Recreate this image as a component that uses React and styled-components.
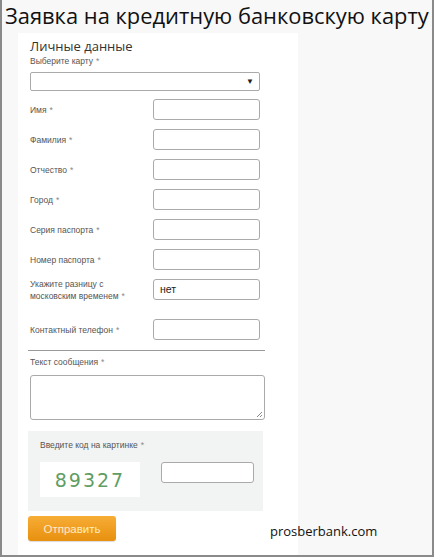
import React from "react";
import styled, { createGlobalStyle } from "styled-components";

const Global = createGlobalStyle`
  html, body { margin: 0; padding: 0; }
  body { font-family: "Liberation Sans", Arial, sans-serif; background: #fff; }
`;

const Frame = styled.div`
  box-sizing: border-box;
  width: 434px;
  height: 557px;
  border: 2px solid #8a8a8a;
  border-top: none;
  background: #f8f8f8;
  display: flex;
  flex-direction: column;
  overflow: hidden;
`;

const Heading = styled.h1`
  margin: 0;
  padding: 0 0 0 3px;
  height: 33px;
  font-family: "Open Sans", sans-serif;
  font-weight: 400;
  font-size: 21.9px;
  line-height: 31px;
  color: #111;
  white-space: nowrap;
`;

const Body = styled.div`
  display: flex;
  flex: 1;
  padding-left: 16px;
`;

const Panel = styled.div`
  width: 280px;
  background: #fff;
  padding: 4px 0 0 12px;
  box-sizing: border-box;
  display: flex;
  flex-direction: column;
`;

const Section = styled.div`
  font-family: "Open Sans", sans-serif;
  font-size: 13px;
  color: #333;
  line-height: 18px;
`;

const Label = styled.div`
  font-size: 8.5px;
  color: #555;
  line-height: 12px;
  width: ${(p) => p.width || "auto"};
  margin-top: ${(p) => p.offset || 0}px;
`;

const Star = styled.span`
  color: #888;
  margin-left: 3px;
`;

const Select = styled.div`
  margin-top: 5px;
  width: 230px;
  height: 19px;
  border: 1px solid #aaa;
  border-radius: 2px;
  box-sizing: border-box;
  display: flex;
  justify-content: flex-end;
  align-items: center;
  padding-right: 5px;
  font-size: 8px;
  color: #222;
`;

const Rows = styled.div`
  display: flex;
  flex-direction: column;
  margin-top: 8px;
`;

const Row = styled.div`
  display: flex;
  align-items: center;
  height: 21px;
  margin-bottom: ${(p) => p.gap || 9}px;
`;

const LabelCell = styled.div`
  width: 123px;
`;

const Input = styled.div`
  box-sizing: border-box;
  width: 107px;
  height: 21px;
  border: 1px solid #aaa;
  border-radius: 3px;
  background: #fff;
  font-size: 10.5px;
  color: #222;
  padding: 3px 0 0 6px;
`;

const Divider = styled.hr`
  margin: 1px 0 0 -2px;
  width: 237px;
  border: none;
  border-top: 1px solid #999;
`;

const Textarea = styled.div`
  position: relative;
  margin-top: 7px;
  box-sizing: border-box;
  width: 235px;
  height: 45px;
  border: 1px solid #aaa;
  border-radius: 3px;
`;

const Grip = styled.svg`
  position: absolute;
  right: 1px;
  bottom: 1px;
`;

const Captcha = styled.div`
  margin: 11px 0 0 -2px;
  width: 235px;
  height: 80px;
  background: #f2f3f3;
  box-sizing: border-box;
  padding: 8px 0 0 12px;
`;

const CaptchaRow = styled.div`
  display: flex;
  align-items: flex-start;
  margin-top: 11px;
`;

const CodeImage = styled.div`
  width: 100px;
  height: 35px;
  background: #fff;
  display: flex;
  align-items: center;
  justify-content: center;
  font-family: "DejaVu Sans", sans-serif;
  font-size: 19px;
  letter-spacing: 2px;
  color: #5f9d63;
`;

const CodeInput = styled(Input)`
  margin-left: 21px;
  width: 93px;
`;

const Footer = styled.div`
  display: flex;
  align-items: center;
  margin: 5px 0 0 -2px;
`;

const Button = styled.div`
  flex-shrink: 0;
  width: 88px;
  height: 25px;
  border-radius: 3px;
  background: linear-gradient(#f7ad35, #e8900f);
  color: #fdebc4;
  font-size: 11.5px;
  display: flex;
  align-items: center;
  justify-content: center;
  box-shadow: 0 1px 1px rgba(0, 0, 0, 0.15);
`;

const Site = styled.div`
  flex-shrink: 0;
  margin: 4px 0 0 154px;
  font-family: "Open Sans", sans-serif;
  font-size: 13px;
  color: #111;
  white-space: nowrap;
`;

const fields = [
  { label: "Имя" },
  { label: "Фамилия" },
  { label: "Отчество" },
  { label: "Город" },
  { label: "Серия паспорта" },
  { label: "Номер паспорта" },
  { label: "Укажите разницу с московским временем", value: "нет", gap: 19 },
  { label: "Контактный телефон", gap: 9 },
];

export default function App() {
  return (
    <>
      <Global />
      <Frame>
        <Heading>Заявка на кредитную банковскую карту</Heading>
        <Body>
          <Panel>
            <Section>Личные данные</Section>
            <Label>
              Выберите карту<Star>*</Star>
            </Label>
            <Select>▼</Select>
            <Rows>
              {fields.map((f) => (
                <Row key={f.label} gap={f.gap}>
                  <LabelCell>
                    <Label width="100px">
                      {f.label}
                      <Star>*</Star>
                    </Label>
                  </LabelCell>
                  <Input>{f.value}</Input>
                </Row>
              ))}
            </Rows>
            <Divider />
            <Label offset={5}>
              Текст сообщения<Star>*</Star>
            </Label>
            <Textarea>
              <Grip width="8" height="8" viewBox="0 0 8 8">
                <path d="M7 2 L2 7 M7 5 L5 7" stroke="#888" strokeWidth="1" />
              </Grip>
            </Textarea>
            <Captcha>
              <Label>
                Введите код на картинке<Star>*</Star>
              </Label>
              <CaptchaRow>
                <CodeImage>89327</CodeImage>
                <CodeInput />
              </CaptchaRow>
            </Captcha>
            <Footer>
              <Button>Отправить</Button>
              <Site>prosberbank.com</Site>
            </Footer>
          </Panel>
        </Body>
      </Frame>
    </>
  );
}
